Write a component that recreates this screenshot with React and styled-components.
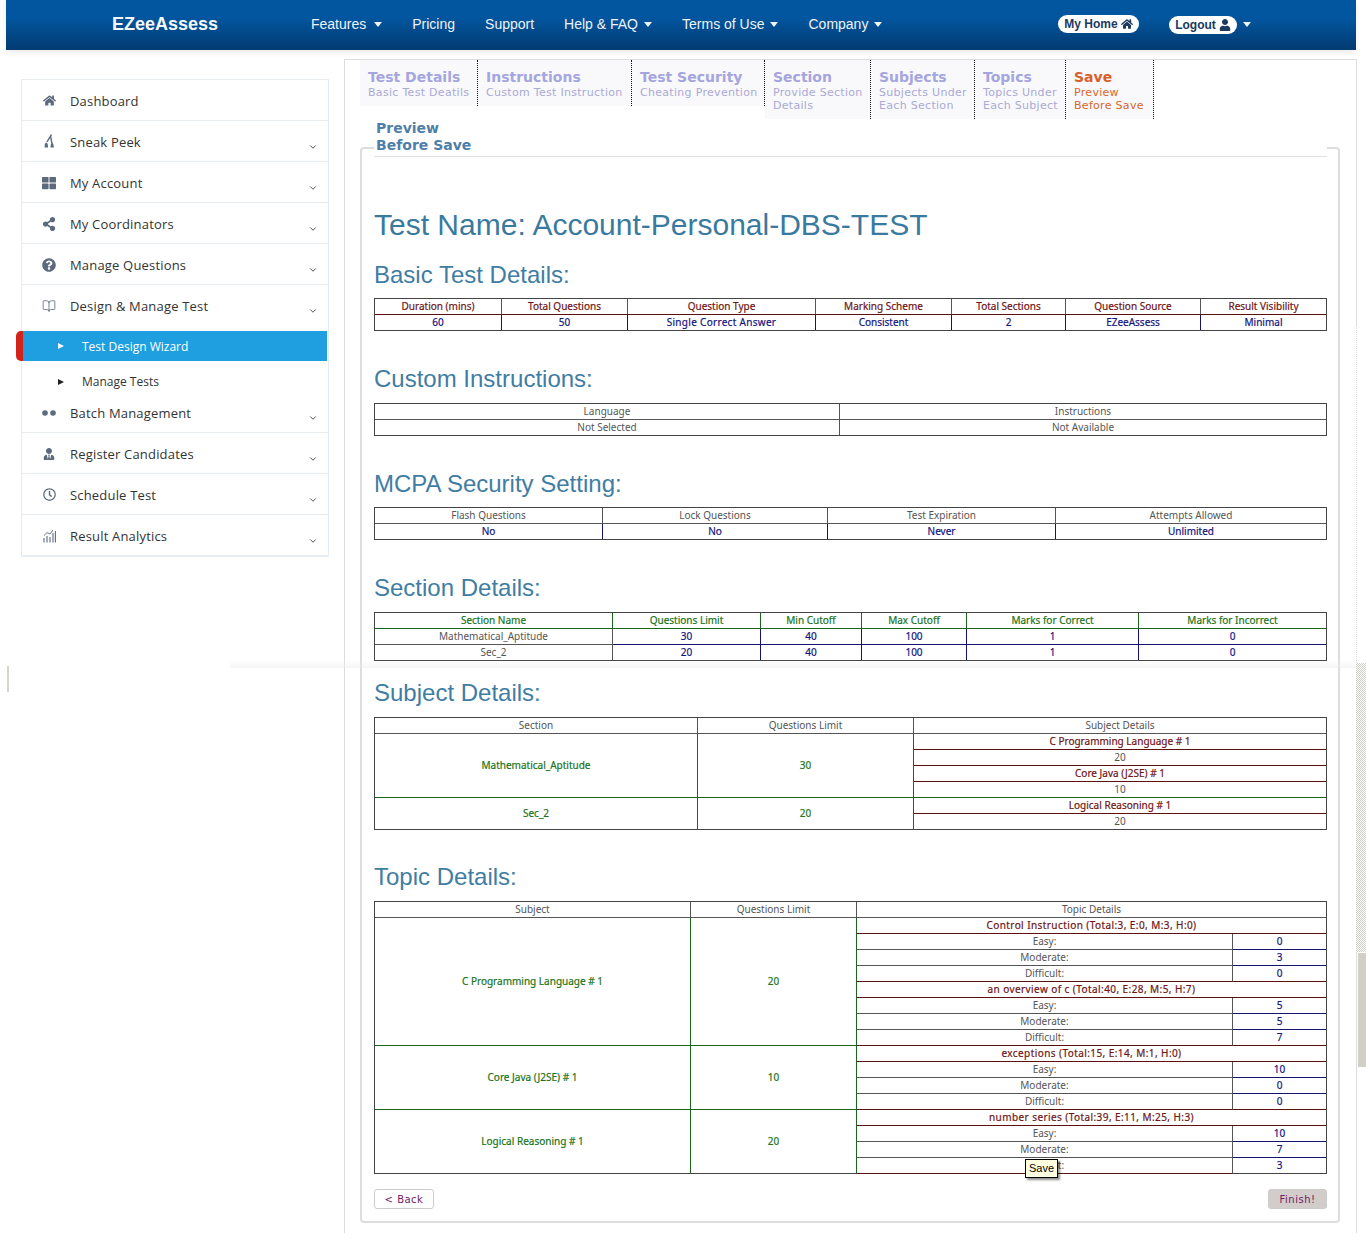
import React from 'react';
import styled, { createGlobalStyle } from 'styled-components';
import {
  FaHome, FaThLarge, FaShareAlt, FaQuestionCircle, FaUserTie, FaRegClock, FaUser,
} from 'react-icons/fa';
import { LuBookOpen, LuChevronDown } from 'react-icons/lu';

const GlobalStyle = createGlobalStyle`
  html, body { margin: 0; padding: 0; background: #fff; }
  body { overflow: hidden; font-family: 'Open Sans', sans-serif; }
`;

const Page = styled.div`
  position: relative;
  width: 1366px;
  height: 1247px;
  padding-left: 6px;
  box-sizing: border-box;
  overflow: hidden;
`;

/* top bar */
const TopBar = styled.header`
  width: 1350px;
  height: 50px;
  display: flex;
  align-items: center;
  box-sizing: border-box;
  padding: 0 0 1px 106px;
  background: linear-gradient(#02569f 0%, #02569f 35%, #023a70 100%);
  box-shadow: 0 3px 6px rgba(0, 0, 0, 0.08);
  font-family: 'Liberation Sans', Arial, sans-serif;
  color: #fff;
`;

const Brand = styled.div`
  width: 199px;
  font-size: 18px;
  font-weight: bold;
  color: #f4f8fb;
`;

const NavList = styled.nav`
  display: flex;
  align-items: center;
  gap: 30px;
  width: 747px;
  margin-top: -1px;
`;

const NavLink = styled.span`
  font-size: 14px;
  color: #eef3f8;
  display: inline-flex;
  align-items: center;
`;

const Caret = styled.i`
  display: inline-block;
  margin-left: ${props => props.$gap || 7}px;
  width: 0;
  height: 0;
  border-left: 4.5px solid transparent;
  border-right: 4.5px solid transparent;
  border-top: 5px solid #eef3f8;
`;

const Pill = styled.span`
  display: inline-flex;
  align-items: center;
  justify-content: center;
  gap: 3px;
  box-sizing: border-box;
  height: 18px;
  width: ${props => props.$w}px;
  margin-right: ${props => props.$mr || 0}px;
  margin-top: ${props => props.$mt || 0}px;
  border-radius: 10px;
  background: #fff;
  color: #1a3a60;
  font-size: 12px;
  font-weight: bold;
  white-space: nowrap;
`;

/* columns */
const Columns = styled.div`
  display: flex;
  align-items: flex-start;
`;

const Sidebar = styled.aside`
  width: 308px;
  margin: 29px 0 0 15px;
  box-sizing: border-box;
  border: 1px solid #e7ecf1;
  border-bottom-width: 2px;
  background: #fff;
`;

const MenuRow = styled.div`
  height: ${props => (props.$last ? 40 : 41)}px;
  box-sizing: border-box;
  display: flex;
  align-items: center;
  padding: 1px 0 0 20px;
  border-bottom: ${props => (props.$plain || props.$last ? 'none' : '1px solid #e7ecf1')};
  color: #333;
  font-size: 13px;
  letter-spacing: 0.18px;
`;

const MenuIcon = styled.span`
  width: 14px;
  height: 14px;
  margin-right: 14px;
  display: flex;
  align-items: center;
  justify-content: center;
  color: #5b6a7d;
  font-size: 14px;
`;

const MenuLabel = styled.span`
  flex: 1;
`;

const Chevron = styled(LuChevronDown)`
  width: 10px;
  height: 10px;
  margin: 10px 10px 0 0;
  color: #555;
  stroke-width: 2.4;
`;

const SubLink = styled.div`
  position: relative;
  display: flex;
  align-items: center;
  box-sizing: border-box;
  height: ${props => (props.$active ? 30 : 31)}px;
  width: ${props => (props.$active ? 305 : 306)}px;
  margin-top: ${props => (props.$active ? 5 : 0)}px;
  padding: ${props => (props.$active ? 0 : 10)}px 0 0 36px;
  background: ${props => (props.$active ? '#1f9fe0' : 'transparent')};
  color: ${props => (props.$active ? '#fff' : '#333')};
  font-size: 12px;

  &::before {
    content: '';
    margin-right: 18px;
    border-left: 6px solid ${props => (props.$active ? '#fff' : '#222')};
    border-top: 3.5px solid transparent;
    border-bottom: 3.5px solid transparent;
  }
`;

const RedTab = styled.span`
  position: absolute;
  left: -6px;
  top: 0;
  width: 7px;
  height: 30px;
  border-radius: 5px 0 0 5px;
  background: #d2221c;
`;

/* main panel */
const Main = styled.main`
  width: 1013px;
  height: 1174px;
  margin: 9px 0 0 15px;
  box-sizing: border-box;
  border: 1px solid #ddd;
  border-bottom: none;
  padding-left: 15px;
`;

const TabRow = styled.div`
  display: flex;
  align-items: flex-start;
  height: 60px;
`;

const Tab = styled.div`
  box-sizing: border-box;
  width: ${props => props.$w}px;
  height: ${props => (props.$tall ? 59 : 46)}px;
  padding: 9px 0 0 8px;
  background: #f9f9fb;
  border-right: 1px dotted #111;
  font-family: 'DejaVu Sans', Verdana, sans-serif;
  color: ${props => (props.$active ? '#d9652b' : '#a9a9d6')};
`;

const TabTitle = styled.div`
  font-size: 14px;
  line-height: 17px;
  font-weight: bold;
  color: ${props => (props.$active ? '#d9602a' : '#a5a5e0')};
`;

const TabSub = styled.div`
  font-size: 11px;
  line-height: 13px;
  letter-spacing: 0.3px;
  white-space: nowrap;
`;

const Frame = styled.fieldset`
  margin: 0;
  width: 980px;
  height: 1103px;
  box-sizing: border-box;
  border: 2px solid #ddd;
  border-radius: 4px;
  padding: 0 8px 0 12px;
`;

const Legend = styled.legend`
  display: block;
  box-sizing: border-box;
  width: 953px;
  height: 56px;
  padding: 0;
`;

const LegendText = styled.div`
  box-sizing: border-box;
  height: 37px;
  padding: 0 0 0 2px;
  border-bottom: 1px solid #e2e2e2;
  font-family: 'DejaVu Sans', Verdana, sans-serif;
  font-size: 14px;
  line-height: 17px;
  font-weight: bold;
  color: #4f7fa9;
`;

const TestName = styled.h1`
  margin: 29px 0 0;
  height: 40px;
  font: normal 30px/40px 'Liberation Sans', Arial, sans-serif;
  color: #3a7a9e;
`;

const Heading = styled.h2`
  margin: ${props => props.$before}px 0 ${props => props.$after || 9}px;
  height: 30px;
  font: normal 24px/30px 'Liberation Sans', Arial, sans-serif;
  color: #3f7da3;
`;

const Grid = styled.table`
  width: 953px;
  table-layout: fixed;
  box-sizing: border-box;
  border-collapse: separate;
  border-spacing: 0;
  border-top: 1px solid #444;
  border-left: 1px solid #444;
  outline: 1px solid #444;
  outline-offset: -1px;
`;

const Col = styled.col`
  width: ${props => props.$w}px;
`;

const inks = {
  maroon: '#6e1616',
  navy: '#14147e',
  grey: '#555',
  green: '#1a741a',
};

const lines = {
  maroon: '#5e1010',
  navy: '#14146e',
  grey: '#555',
  green: '#1a661a',
};

const Cell = styled.td`
  position: ${props => (props.$anchor ? 'relative' : 'static')};
  box-sizing: border-box;
  height: 16px;
  padding: 0;
  text-align: center;
  vertical-align: middle;
  font-family: 'Noto Sans', Tahoma, sans-serif;
  font-size: 10px;
  line-height: 15px;
  letter-spacing: ${props => props.$track || 0}px;
  color: ${props => inks[props.$ink || 'grey']};
  border-right: 1px solid ${props => lines[props.$side || props.$ink || 'grey']};
  border-bottom: 1px solid ${props => lines[props.$under || props.$ink || 'grey']};
  -webkit-text-stroke: ${props => (props.$ink && props.$ink !== 'grey' ? '0.2px' : '0')};
`;

const Tip = styled.span`
  position: absolute;
  left: 168px;
  top: 1px;
  box-sizing: border-box;
  width: 33px;
  height: 19px;
  border: 1px solid #000;
  background: #ffffe1;
  box-shadow: 2px 2px 2px rgba(0, 0, 0, 0.45);
  color: #000;
  font: 11px/17px 'Liberation Sans', Arial, sans-serif;
  -webkit-text-stroke: 0;
`;

const Actions = styled.div`
  display: flex;
  justify-content: space-between;
  width: 953px;
  margin-top: 15px;
`;

const Button = styled.button`
  box-sizing: border-box;
  width: ${props => props.$w}px;
  height: 20px;
  padding: 0;
  border: 1px solid #ccc;
  border-radius: 3px;
  background: ${props => (props.$primary ? '#d2cdca' : '#fff')};
  color: #701a66;
  font-family: 'DejaVu Sans', Verdana, sans-serif;
  font-size: 10px;
  letter-spacing: 0.5px;
`;

/* leftovers of the browser window in the stitched capture */
const ScrollTrack = styled.span`
  position: absolute;
  left: 1356px;
  top: 663px;
  width: 10px;
  height: 289px;
  background: conic-gradient(#cfcdc4 25%, #fff 0 50%, #cfcdc4 0 75%, #fff 0) 0 0 / 2px 2px;
`;

const ScrollThumb = styled.span`
  position: absolute;
  left: 1358px;
  top: 953px;
  width: 8px;
  height: 114px;
  background: #d2cfc8;
`;

const FadedEdge = styled.span`
  position: absolute;
  left: 1356px;
  top: 325px;
  width: 1px;
  height: 338px;
  background: #fff;
  border-left: 1px dotted #ddd;
  box-sizing: border-box;
`;

const Seam = styled.span`
  position: absolute;
  left: 230px;
  top: 660px;
  width: 1126px;
  height: 8px;
  background: linear-gradient(rgba(235, 235, 235, 0), rgba(235, 235, 235, 0.45));
`;

const Tick = styled.span`
  position: absolute;
  left: 7px;
  top: 666px;
  width: 2px;
  height: 26px;
  background: #d6d6cc;
`;

const SneakIcon = () => (
  <svg width="12" height="15" viewBox="0 0 12 15" fill="#5b6a7d">
    <path d="M8 0 L9 1 L4.6 8.2 L3.4 7.6 Z" />
    <path d="M8 1 L9.6 9 L8.2 9.2 L7 3 Z" />
    <path d="M3.2 8.4 C4.6 8.4 5 10.5 5 13.5 L1.6 13.5 C1.5 10.8 2 8.4 3.2 8.4 Z" />
    <path d="M9 8.8 C10.2 8.8 10.8 11 10.8 13.5 L7.6 13.5 C7.6 11 7.9 8.8 9 8.8 Z" />
  </svg>
);

const DotsIcon = () => (
  <svg width="14" height="6" viewBox="0 0 14 6" fill="#5b6a7d">
    <circle cx="3" cy="3" r="2.8" />
    <circle cx="11" cy="3" r="2.8" />
  </svg>
);

const BarsIcon = () => (
  <svg width="13" height="14" viewBox="0 0 13 14" fill="none" stroke="#5b6a7d" strokeWidth="1.1">
    <path d="M1 13.5V9M4 13.5V7M7 13.5V8M10 13.5V4M12.4 13.5V2" />
    <path d="M1 6.5 L4 3.6 L7 5 L10 1" strokeWidth="0.9" />
  </svg>
);

const menuTop = [
  { label: 'Dashboard', icon: <FaHome size={13} />, flat: true },
  { label: 'Sneak Peek', icon: <SneakIcon /> },
  { label: 'My Account', icon: <FaThLarge /> },
  { label: 'My Coordinators', icon: <FaShareAlt /> },
  { label: 'Manage Questions', icon: <FaQuestionCircle /> },
];

const menuBottom = [
  { label: 'Batch Management', icon: <DotsIcon /> },
  { label: 'Register Candidates', icon: <FaUserTie size={12} /> },
  { label: 'Schedule Test', icon: <FaRegClock size={13} /> },
  { label: 'Result Analytics', icon: <BarsIcon />, last: true },
];

const tabs = [
  { title: 'Test Details', sub: ['Basic Test Deatils'], w: 118 },
  { title: 'Instructions', sub: ['Custom Test Instruction'], w: 154 },
  { title: 'Test Security', sub: ['Cheating Prevention'], w: 133 },
  { title: 'Section', sub: ['Provide Section', 'Details'], w: 106 },
  { title: 'Subjects', sub: ['Subjects Under', 'Each Section'], w: 104 },
  { title: 'Topics', sub: ['Topics Under', 'Each Subject'], w: 91 },
  { title: 'Save', sub: ['Preview', 'Before Save'], w: 88, active: true },
];

const MenuItem = ({ item }) => (
  <MenuRow $last={item.last}>
    <MenuIcon>{item.icon}</MenuIcon>
    <MenuLabel>{item.label}</MenuLabel>
    {!item.flat && <Chevron />}
  </MenuRow>
);

const DataTable = ({ cols, head, headInk, rows }) => (
  <Grid>
    <colgroup>
      {cols.map((w, i) => <Col key={i} $w={w} />)}
    </colgroup>
    <tbody>
      <tr>
        {head.map(h => <Cell key={h} $ink={headInk} $side={headInk === 'maroon' ? 'grey' : headInk}>{h}</Cell>)}
      </tr>
      {rows.map((row, r) => (
        <tr key={r}>
          {row.map((c, i) => <Cell key={i} $ink={c.ink} $track={c.track}>{c.text}</Cell>)}
        </tr>
      ))}
    </tbody>
  </Grid>
);

const navy = text => ({ text, ink: 'navy', track: text.length > 15 ? 0.3 : 0 });
const grey = text => ({ text });

const subjects = [
  { section: 'Mathematical_Aptitude', limit: 30, items: [['C Programming Language # 1', 20], ['Core Java (J2SE) # 1', 10]] },
  { section: 'Sec_2', limit: 20, items: [['Logical Reasoning # 1', 20]] },
];

const topics = [
  {
    subject: 'C Programming Language # 1',
    limit: 20,
    items: [
      ['Control Instruction (Total:3, E:0, M:3, H:0)', 0, 3, 0],
      ['an overview of c (Total:40, E:28, M:5, H:7)', 5, 5, 7],
    ],
  },
  { subject: 'Core Java (J2SE) # 1', limit: 10, items: [['exceptions (Total:15, E:14, M:1, H:0)', 10, 0, 0]] },
  { subject: 'Logical Reasoning # 1', limit: 20, items: [['number series (Total:39, E:11, M:25, H:3)', 10, 7, 3]] },
];

const SubjectTable = () => (
  <Grid>
    <colgroup>
      <Col $w={323} /><Col $w={216} /><Col $w={413} />
    </colgroup>
    <tbody>
      <tr>
        <Cell>Section</Cell><Cell>Questions Limit</Cell><Cell>Subject Details</Cell>
      </tr>
      {subjects.map(s => s.items.flatMap((it, i) => [
        <tr key={`${it[0]}-t`}>
          {i === 0 && <Cell $ink="green" rowSpan={s.items.length * 2}>{s.section}</Cell>}
          {i === 0 && <Cell $ink="green" rowSpan={s.items.length * 2}>{s.limit}</Cell>}
          <Cell $ink="maroon" $side="grey">{it[0]}</Cell>
        </tr>,
        <tr key={`${it[0]}-v`}>
          <Cell $under={i === s.items.length - 1 ? 'green' : 'maroon'}>{it[1]}</Cell>
        </tr>,
      ]))}
    </tbody>
  </Grid>
);

const TopicTable = () => (
  <Grid>
    <colgroup>
      <Col $w={316} /><Col $w={166} /><Col $w={376} /><Col $w={94} />
    </colgroup>
    <tbody>
      <tr>
        <Cell>Subject</Cell><Cell>Questions Limit</Cell><Cell colSpan={2}>Topic Details</Cell>
      </tr>
      {topics.map((t, ti) => t.items.flatMap((it, i) => {
        const isLast = ti === topics.length - 1;
        return [
          <tr key={it[0]}>
            {i === 0 && <Cell $ink="green" rowSpan={t.items.length * 4}>{t.subject}</Cell>}
            {i === 0 && <Cell $ink="green" rowSpan={t.items.length * 4}>{t.limit}</Cell>}
            <Cell $ink="maroon" colSpan={2} $track={0.42}>{it[0]}</Cell>
          </tr>,
          ['Easy:', 'Moderate:', 'Difficult:'].map((level, l) => {
            const tipped = isLast && l === 2;
            return (
              <tr key={`${it[0]}-${level}`}>
                <Cell $under={l === 2 ? 'maroon' : 'grey'} $anchor={tipped}>
                  {level}
                  {tipped && <Tip>Save</Tip>}
                </Cell>
                <Cell $ink="navy" $under={l === 2 ? 'maroon' : 'navy'}>{it[l + 1]}</Cell>
              </tr>
            );
          }),
        ];
      }))}
    </tbody>
  </Grid>
);

export default function App() {
  return (
    <Page>
      <GlobalStyle />
      <TopBar>
        <Brand>EZeeAssess</Brand>
        <NavList>
          <NavLink>Features<Caret $gap={8} /></NavLink>
          <NavLink>Pricing</NavLink>
          <NavLink>Support</NavLink>
          <NavLink>Help &amp; FAQ<Caret $gap={6} /></NavLink>
          <NavLink>Terms of Use<Caret $gap={6} /></NavLink>
          <NavLink>Company<Caret $gap={6} /></NavLink>
        </NavList>
        <Pill $w={81} $mr={30} $mt={-2}>My Home <FaHome size={12} /></Pill>
        <Pill $w={68}>Logout <FaUser size={12} /></Pill>
        <Caret $gap={6} />
      </TopBar>

      <Columns>
        <Sidebar>
          {menuTop.map(m => <MenuItem key={m.label} item={m} />)}
          <MenuRow $plain>
            <MenuIcon><LuBookOpen size={14} strokeWidth={1.4} /></MenuIcon>
            <MenuLabel>Design &amp; Manage Test</MenuLabel>
            <Chevron />
          </MenuRow>
          <SubLink $active><RedTab />Test Design Wizard</SubLink>
          <SubLink>Manage Tests</SubLink>
          {menuBottom.map(m => <MenuItem key={m.label} item={m} />)}
        </Sidebar>

        <Main>
          <TabRow>
            {tabs.map(t => (
              <Tab key={t.title} $w={t.w} $tall={t.sub.length > 1} $active={t.active}>
                <TabTitle $active={t.active}>{t.title}</TabTitle>
                {t.sub.map(s => <TabSub key={s}>{s}</TabSub>)}
              </Tab>
            ))}
          </TabRow>

          <Frame>
            <Legend><LegendText>Preview<br />Before Save</LegendText></Legend>
            <TestName>Test Name: Account-Personal-DBS-TEST</TestName>

            <Heading $before={15} $after={8}>Basic Test Details:</Heading>
            <DataTable
              cols={[127, 126, 188, 136, 114, 135, 126]}
              head={['Duration (mins)', 'Total Questions', 'Question Type', 'Marking Scheme', 'Total Sections', 'Question Source', 'Result Visibility']}
              headInk="maroon"
              rows={[['60', '50', 'Single Correct Answer', 'Consistent', '2', 'EZeeAssess', 'Minimal'].map(navy)]}
            />

            <Heading $before={33}>Custom Instructions:</Heading>
            <DataTable
              cols={[465, 487]}
              head={['Language', 'Instructions']}
              rows={[['Not Selected', 'Not Available'].map(grey)]}
            />

            <Heading $before={33} $after={8}>MCPA Security Setting:</Heading>
            <DataTable
              cols={[228, 225, 228, 271]}
              head={['Flash Questions', 'Lock Questions', 'Test Expiration', 'Attempts Allowed']}
              rows={[['No', 'No', 'Never', 'Unlimited'].map(navy)]}
            />

            <Heading $before={33}>Section Details:</Heading>
            <DataTable
              cols={[238, 148, 101, 105, 172, 188]}
              head={['Section Name', 'Questions Limit', 'Min Cutoff', 'Max Cutoff', 'Marks for Correct', 'Marks for Incorrect']}
              headInk="green"
              rows={[
                [grey('Mathematical_Aptitude'), ...['30', '40', '100', '1', '0'].map(navy)],
                [grey('Sec_2'), ...['20', '40', '100', '1', '0'].map(navy)],
              ]}
            />

            <Heading $before={17}>Subject Details:</Heading>
            <SubjectTable />

            <Heading $before={32}>Topic Details:</Heading>
            <TopicTable />

            <Actions>
              <Button $w={60}>&lt; Back</Button>
              <Button $w={59} $primary>Finish!</Button>
            </Actions>
          </Frame>
        </Main>
      </Columns>

      <FadedEdge />
      <Seam />
      <Tick />
      <ScrollTrack />
      <ScrollThumb />
    </Page>
  );
}
